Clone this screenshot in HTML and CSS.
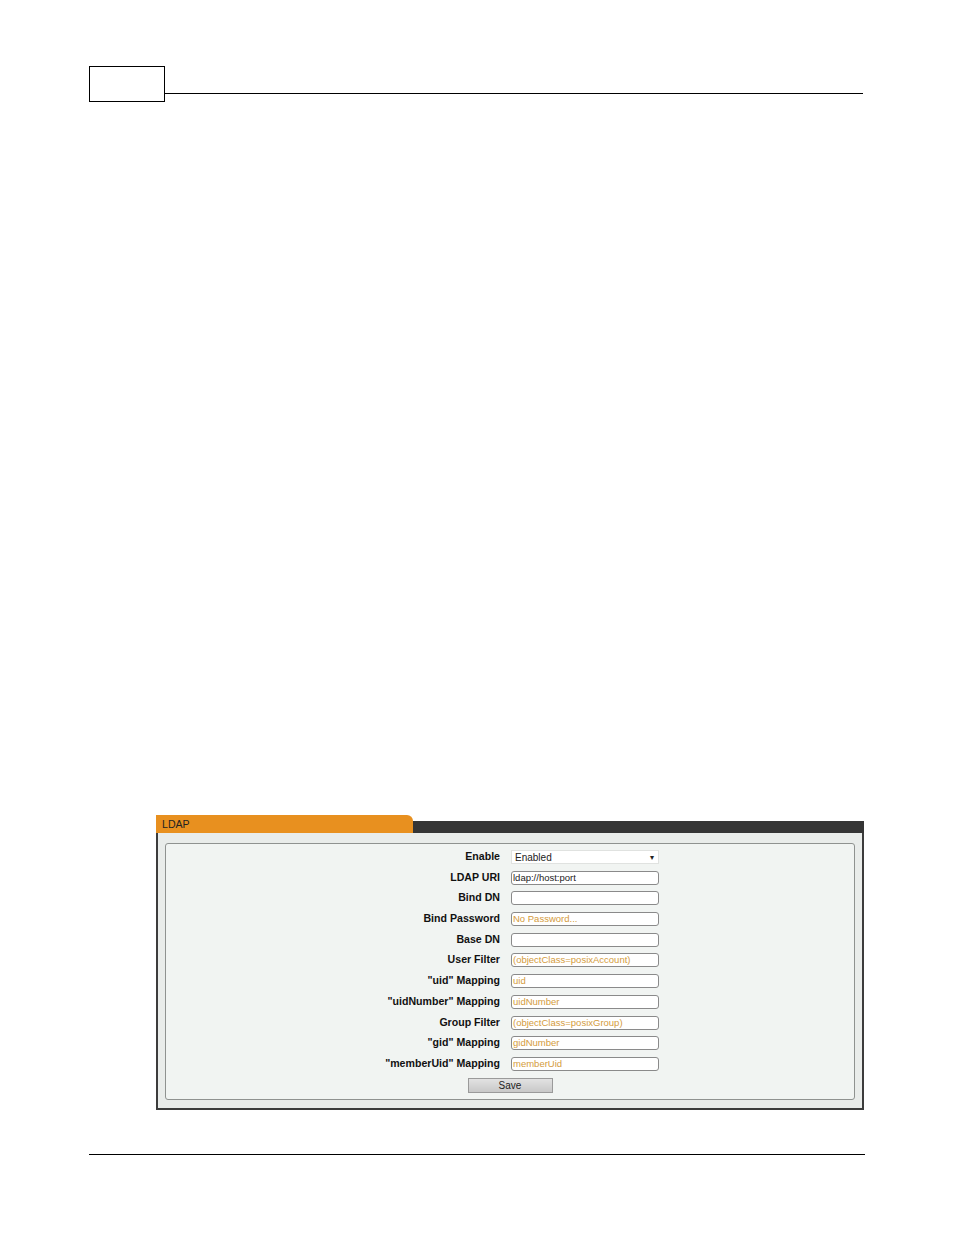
FILE: index.html
```html
<!DOCTYPE html>
<html>
<head>
<meta charset="utf-8">
<link rel="stylesheet" href="styles.css">
</head>
<body>
<div class="page">
  <div class="header">
    <div class="hbox"></div>
    <div class="hline"></div>
  </div>
  <div class="panel">
    <div class="tabbar">
      <div class="tab">LDAP</div>
      <div class="tabrest"></div>
    </div>
    <div class="pbody">
      <div class="inner">
        <div class="form">
          <div class="lbl">Enable</div>
          <div class="sel"><span>Enabled</span><span class="arrow">&#9662;</span></div>
          <div class="lbl">LDAP URI</div>
          <div class="inp val">ldap://host:port</div>
          <div class="lbl">Bind DN</div>
          <div class="inp"></div>
          <div class="lbl">Bind Password</div>
          <div class="inp ph">No Password...</div>
          <div class="lbl">Base DN</div>
          <div class="inp"></div>
          <div class="lbl">User Filter</div>
          <div class="inp ph">(objectClass=posixAccount)</div>
          <div class="lbl">"uid" Mapping</div>
          <div class="inp ph">uid</div>
          <div class="lbl">"uidNumber" Mapping</div>
          <div class="inp ph">uidNumber</div>
          <div class="lbl">Group Filter</div>
          <div class="inp ph">(objectClass=posixGroup)</div>
          <div class="lbl">"gid" Mapping</div>
          <div class="inp ph">gidNumber</div>
          <div class="lbl">"memberUid" Mapping</div>
          <div class="inp ph">memberUid</div>
        </div>
        <div class="btnrow"><div class="btn">Save</div></div>
      </div>
    </div>
  </div>
  <div class="footer"></div>
</div>
</body>
</html>
```
FILE: styles.css
```css
html, body { margin: 0; padding: 0; background: #fff; }
body { font-family: "Liberation Sans", Arial, sans-serif; }
.page { padding-top: 66px; }
.header { display: flex; align-items: flex-end; margin-left: 89px; width: 774px; }
.hbox { width: 74px; height: 34px; border: 1px solid #000; }
.hline { flex: 1; border-bottom: 1px solid #000; margin-bottom: 8px; }
.panel { margin-left: 156px; width: 708px; margin-top: 713px; }
.tabbar { display: flex; height: 18px; }
.tab { width: 257px; background: #e8901f; border-top-right-radius: 6px; font-size: 10.6px; color: #222; padding-left: 6px; box-sizing: border-box; line-height: 19px; }
.tabrest { flex: 1; align-self: flex-end; height: 12px; background: #353535; }
.pbody { background: #e9ecea; border: 2px solid #3c3c3c; border-top: none; padding: 10px 7px 8px 7px; }
.inner { border: 1px solid #8f9290; border-radius: 3px; background: #f1f4f2; padding: 6px 0 6px 0; }
.form { display: grid; grid-template-columns: 334px 148px; column-gap: 11px; row-gap: 6.7px; grid-auto-rows: 14px; }
.lbl { text-align: right; font-weight: bold; font-size: 10.6px; line-height: 13px; color: #111; }
.inp { box-sizing: border-box; border: 1px solid #8a8a8a; border-radius: 3px; background: #fff; font-size: 9.5px; line-height: 12px; padding-left: 1px; white-space: nowrap; overflow: hidden; }
.val { color: #222; }
.ph { color: #d49b3c; }
.sel { box-sizing: border-box; background: #fff; border: 1px solid #e0e2e0; font-size: 10px; line-height: 13px; padding-left: 3px; padding-right: 4px; display: flex; justify-content: space-between; color: #222; }
.arrow { font-size: 8px; }
.btnrow { display: flex; justify-content: center; margin-top: 7px; }
.btn { width: 85px; height: 15px; box-sizing: border-box; border: 1px solid #9a9a9a; background: linear-gradient(#e2e2e2, #c8c8c8); font-size: 10px; line-height: 13px; text-align: center; color: #222; }
.footer { margin-left: 89px; width: 776px; border-top: 1px solid #000; margin-top: 44px; }
```
